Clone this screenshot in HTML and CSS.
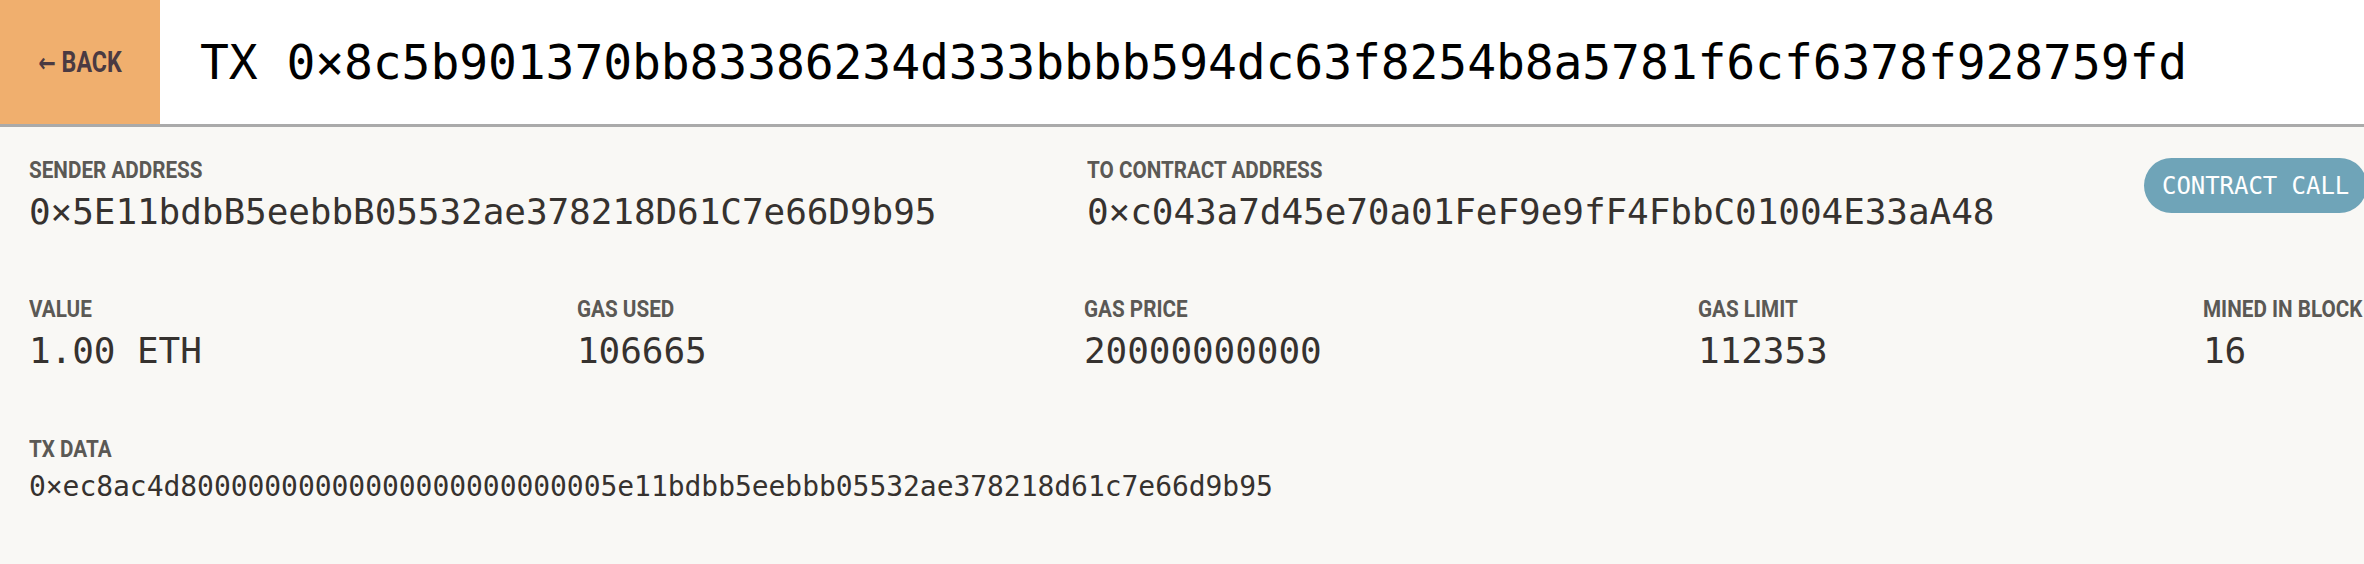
FILE: index.html
```html
<!DOCTYPE html>
<html lang="en">
<head>
<meta charset="utf-8">
<title>Transaction</title>
<link rel="stylesheet" href="styles.css">
</head>
<body>
<header class="topbar">
  <a class="back" href="#"><span class="back-text"><span class="arrow">&larr;</span> BACK</span></a>
  <h1 class="title">TX 0×8c5b901370bb83386234d333bbbb594dc63f8254b8a5781f6cf6378f928759fd</h1>
</header>
<main class="details">
  <section class="row row-addresses">
    <div class="field">
      <div class="label">SENDER ADDRESS</div>
      <div class="value">0×5E11bdbB5eebbB05532ae378218D61C7e66D9b95</div>
    </div>
    <div class="field">
      <div class="label">TO CONTRACT ADDRESS</div>
      <div class="value">0×c043a7d45e70a01FeF9e9fF4FbbC01004E33aA48</div>
    </div>
    <div class="field field-badge">
      <span class="badge">CONTRACT CALL</span>
    </div>
  </section>
  <section class="row row-stats">
    <div class="field">
      <div class="label">VALUE</div>
      <div class="value">1.00 ETH</div>
    </div>
    <div class="field">
      <div class="label">GAS USED</div>
      <div class="value">106665</div>
    </div>
    <div class="field">
      <div class="label">GAS PRICE</div>
      <div class="value">20000000000</div>
    </div>
    <div class="field">
      <div class="label">GAS LIMIT</div>
      <div class="value">112353</div>
    </div>
    <div class="field">
      <div class="label">MINED IN BLOCK</div>
      <div class="value">16</div>
    </div>
  </section>
  <section class="row row-data">
    <div class="field">
      <div class="label">TX DATA</div>
      <div class="value value-small">0×ec8ac4d8<span>000000000000</span><span>000000000000</span>5e11bdbb5eebbb05532ae378218d61c7e66d9b95</div>
    </div>
  </section>
</main>
</body>
</html>
```

FILE: styles.css
```css
html, body {
  margin: 0;
  padding: 0;
}

body {
  width: 2364px;
  height: 564px;
  overflow: hidden;
  background: #f9f8f5;
  font-family: "DejaVu Sans Mono", "Liberation Mono", monospace;
}

.topbar {
  display: flex;
  align-items: center;
  height: 124px;
  background: #ffffff;
  border-bottom: 3px solid #aaaaaa;
}

.back {
  flex: 0 0 160px;
  align-self: stretch;
  display: flex;
  align-items: center;
  justify-content: center;
  background: #f0af6e;
  color: #4a3a42;
  text-decoration: none;
  font-family: Roboto, sans-serif;
  font-weight: 700;
  font-size: 29px;
  padding-top: 0;
}

.back-text {
  display: inline-block;
  transform: scaleX(0.8);
  white-space: nowrap;
}

.arrow {
  font-family: "DejaVu Sans", sans-serif;
  font-weight: 700;
  font-size: 26px;
}

.title {
  margin: 0 0 0 40px;
  font-family: "DejaVu Sans Mono", monospace;
  font-weight: 400;
  font-size: 48px;
  line-height: 56px;
  letter-spacing: -0.1px;
  color: #000000;
  white-space: nowrap;
}

.details {
  padding: 29px 0 0 29px;
  display: flex;
  flex-direction: column;
  gap: 62px;
}

.row {
  display: grid;
}

.row-addresses {
  grid-template-columns: 1058px 1057px auto;
}

.row-stats {
  grid-template-columns: 548px 507px 614px 505px auto;
}

.row-data {
  margin-top: 1px;
}

.field {
  display: flex;
  flex-direction: column;
  align-items: flex-start;
  gap: 7px;
  white-space: nowrap;
}

.field-badge {
  padding-top: 2px;
}

.label {
  font-family: Roboto, sans-serif;
  font-weight: 700;
  font-size: 23.5px;
  line-height: 28px;
  color: #5b5955;
  transform: scaleX(0.88);
  transform-origin: left center;
}

.value {
  font-size: 36px;
  line-height: 42px;
  color: #36322f;
  letter-spacing: -0.07px;
}

.value-small {
  font-size: 28px;
  line-height: 34px;
  letter-spacing: -0.05px;
}

.badge {
  display: inline-flex;
  align-items: center;
  height: 55px;
  padding: 0 18px;
  border-radius: 28px;
  background: #6fa4b8;
  color: #ffffff;
  font-size: 24px;
  letter-spacing: -0.05px;
}
```
